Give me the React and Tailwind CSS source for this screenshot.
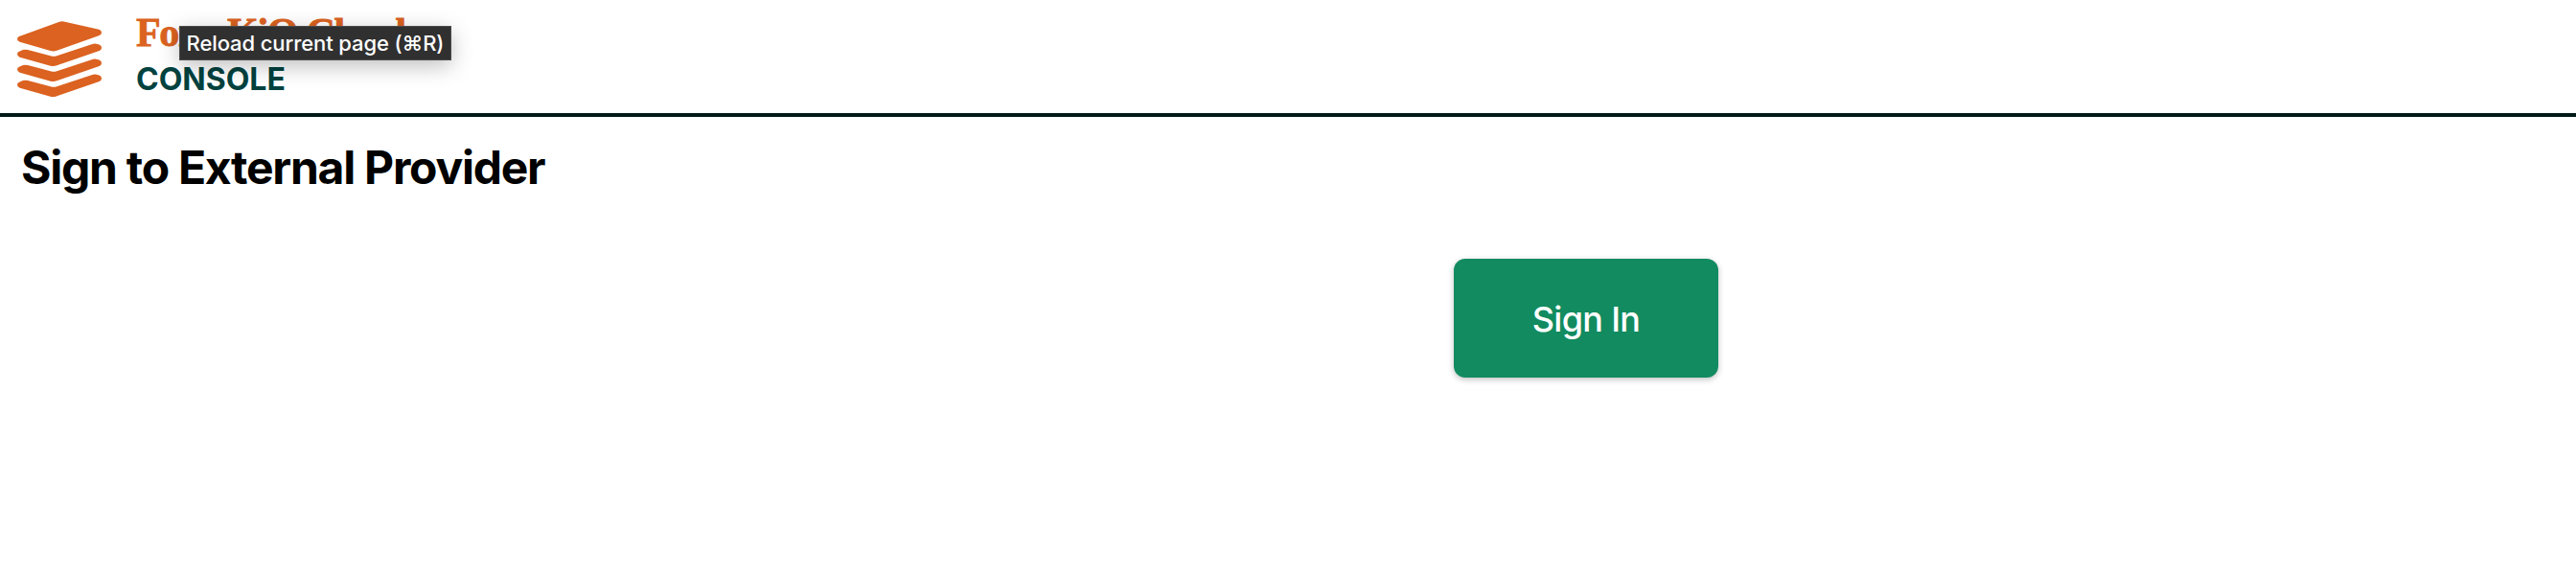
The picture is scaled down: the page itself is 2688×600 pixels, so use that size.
function Logo() {
  return (
    <svg
      className="h-[79px] w-[89px]"
      viewBox="54 67 267 237"
      fill="#db6220"
      aria-hidden="true"
    >
      <path d="M60 115 L184 70 Q193 66 203 69 L310 93 Q318 96 318 103 Q318 109 311 112 L178 159 Q168 163 158 160 L62 132 Q54 129 54 123 Q54 117 60 115Z" />
      <path id="sheet" d="M60 162 L72 157 Q79 155 87 157 L158 176 Q168 179 178 176 L287 140 Q296 136 305 139 L312 141 Q318 144 318 151 Q318 157 311 160 L178 206 Q168 210 158 207 L62 180 Q54 177 54 170 Q54 164 60 162Z" />
      <use href="#sheet" y="48" />
      <use href="#sheet" y="96" />
    </svg>
  );
}

export default function App() {
  return (
    <div className="min-h-[600px] w-full bg-white font-['Inter',sans-serif]">
      <header className="relative flex h-[122px] items-start border-b-4 border-[#001a18] pl-[18px]">
        <div className="pt-[22px]">
          <Logo />
        </div>
        <div className="flex flex-col pl-[35px] pt-[10px]">
          <span className="whitespace-nowrap font-['Liberation_Serif',serif] text-[42px] font-bold leading-[48px] tracking-[-1.3px] text-[#db6220] [-webkit-text-stroke:0.8px_#db6220]">
            FormKiQ Cloud
          </span>
          <span className="pt-[2px] text-[32px] font-bold leading-[46px] text-[#00423f]">CONSOLE</span>
        </div>
        <div className="absolute left-[187px] top-[27px] flex h-9 w-[284px] items-center justify-center whitespace-nowrap border border-[#4b4b4b] bg-[#303030] text-[22px] font-medium tracking-[-0.1px] text-white shadow-[0_6px_22px_rgba(0,0,0,0.25)]">
          Reload current page (⌘R)
        </div>
      </header>
      <main className="flex flex-col">
        <h1 className="pl-[22px] pt-[23px] text-[48px] font-bold leading-[60px] tracking-[-1.25px] text-black">
          Sign to External Provider
        </h1>
        <div className="flex pl-[1517px] pt-[65px]">
          <button className="h-[124px] w-[276px] rounded-xl bg-[#128b60] pt-[2px] text-[36px] font-medium tracking-[-0.7px] text-white shadow-[0_2px_6px_rgba(0,0,0,0.25)]">
            Sign In
          </button>
        </div>
      </main>
    </div>
  );
}
